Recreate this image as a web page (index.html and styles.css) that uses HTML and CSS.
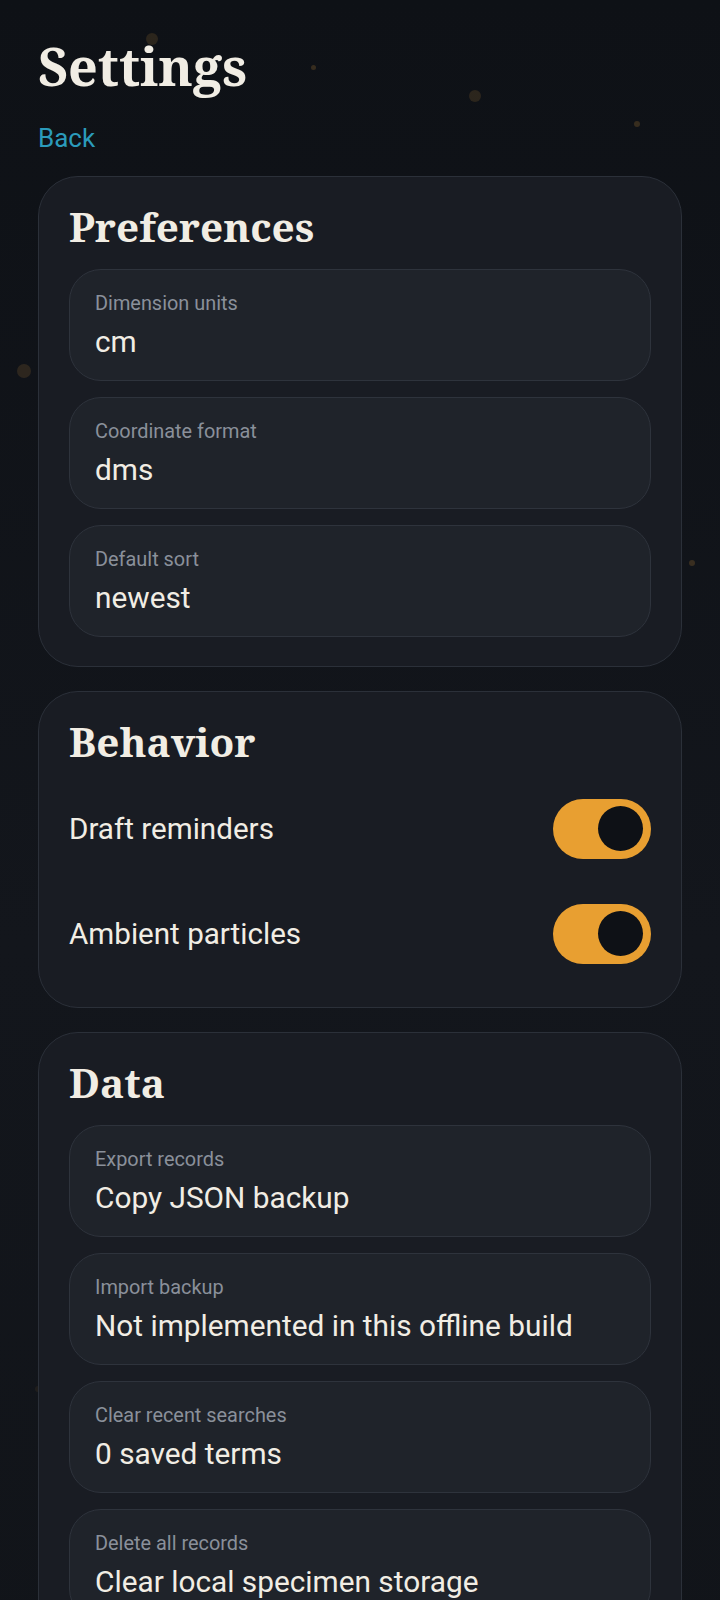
FILE: index.html
```html
<!DOCTYPE html>
<html lang="en">
<head>
<meta charset="utf-8">
<title>Settings</title>
<link rel="stylesheet" href="styles.css">
</head>
<body>
<div class="particles" aria-hidden="true">
  <span class="dot d1"></span>
  <span class="dot d2"></span>
  <span class="dot d3"></span>
  <span class="dot d4"></span>
  <span class="dot d5"></span>
  <span class="dot d6"></span>
  <span class="dot d7"></span>
</div>
<main class="page">
  <h1 class="title">Settings</h1>
  <a class="back" href="#">Back</a>

  <section class="card">
    <h2 class="card-title">Preferences</h2>
    <div class="items">
      <div class="item"><div class="item-label">Dimension units</div><div class="item-value">cm</div></div>
      <div class="item"><div class="item-label">Coordinate format</div><div class="item-value">dms</div></div>
      <div class="item"><div class="item-label">Default sort</div><div class="item-value">newest</div></div>
    </div>
  </section>

  <section class="card">
    <h2 class="card-title">Behavior</h2>
    <div class="items">
      <div class="toggle-row"><span class="toggle-label">Draft reminders</span><span class="toggle on"><span class="knob"></span></span></div>
      <div class="toggle-row"><span class="toggle-label">Ambient particles</span><span class="toggle on"><span class="knob"></span></span></div>
    </div>
  </section>

  <section class="card">
    <h2 class="card-title">Data</h2>
    <div class="items">
      <div class="item"><div class="item-label">Export records</div><div class="item-value">Copy JSON backup</div></div>
      <div class="item"><div class="item-label">Import backup</div><div class="item-value">Not implemented in this offline build</div></div>
      <div class="item"><div class="item-label">Clear recent searches</div><div class="item-value">0 saved terms</div></div>
      <div class="item"><div class="item-label">Delete all records</div><div class="item-value">Clear local specimen storage</div></div>
    </div>
  </section>
</main>
</body>
</html>
```

FILE: styles.css
```css
html, body {
  margin: 0;
  padding: 0;
}

body {
  background: linear-gradient(180deg, #0e1116 0%, #13161c 55%, #111419 100%);
  min-height: 1600px;
  font-family: Roboto, "Liberation Sans", sans-serif;
  color: #f1ede4;
  position: relative;
  overflow: hidden;
}

.particles {
  position: absolute;
  inset: 0;
  pointer-events: none;
}

.dot {
  position: absolute;
  border-radius: 50%;
  background: rgba(200, 140, 60, 0.16);
}
.d1 { left: 146px; top: 33px; width: 12px; height: 12px; }
.d2 { left: 311px; top: 65px; width: 5px; height: 5px; background: rgba(200, 140, 60, 0.22); }
.d3 { left: 469px; top: 90px; width: 12px; height: 12px; }
.d4 { left: 634px; top: 121px; width: 6px; height: 6px; background: rgba(200, 140, 60, 0.22); }
.d5 { left: 17px; top: 364px; width: 14px; height: 14px; }
.d6 { left: 689px; top: 560px; width: 6px; height: 6px; background: rgba(200, 140, 60, 0.22); }
.d7 { left: 35px; top: 1386px; width: 6px; height: 6px; background: rgba(200, 140, 60, 0.08); }

.page {
  position: relative;
  padding: 35px 38px 40px;
  display: flex;
  flex-direction: column;
}

.title {
  margin: 0 0 26px;
  font-family: "Noto Serif", "DejaVu Serif", Georgia, serif;
  font-weight: 700;
  font-size: 52px;
  line-height: 1.2;
  color: #f1ede4;
}

.back {
  align-self: flex-start;
  color: #2b9bbb;
  text-decoration: none;
  font-size: 26px;
  line-height: 31px;
  margin-bottom: 22px;
}

.card {
  background: #191c23;
  border: 1px solid #2b3039;
  border-radius: 40px;
  padding: 25px 30px 29px;
  margin-bottom: 24px;
}

.card-title {
  margin: 0 0 17px;
  font-family: "Noto Serif", "DejaVu Serif", Georgia, serif;
  font-weight: 700;
  font-size: 40.5px;
  line-height: 50px;
  color: #f1ede4;
}

.items {
  display: flex;
  flex-direction: column;
  gap: 16px;
}

.item {
  background: #1f232a;
  border: 1px solid #2e333c;
  border-radius: 32px;
  padding: 22px 25px 20px;
}

.item-label {
  font-size: 19.9px;
  line-height: 24px;
  color: #8a909a;
  margin-bottom: 8px;
}

.item-value {
  font-size: 29.8px;
  line-height: 36px;
  color: #f1ede4;
}

.toggle-row {
  display: flex;
  align-items: center;
  justify-content: space-between;
  padding: 14.5px 0;
}

.toggle-label {
  font-size: 29.6px;
  line-height: 36px;
  color: #f1ede4;
}

.toggle {
  width: 98px;
  height: 60px;
  border-radius: 30px;
  background: #e89f31;
  display: flex;
  align-items: center;
  justify-content: flex-end;
  padding: 0 8px;
  box-sizing: border-box;
}

.knob {
  width: 45px;
  height: 45px;
  border-radius: 50%;
  background: #0e1116;
}
```
